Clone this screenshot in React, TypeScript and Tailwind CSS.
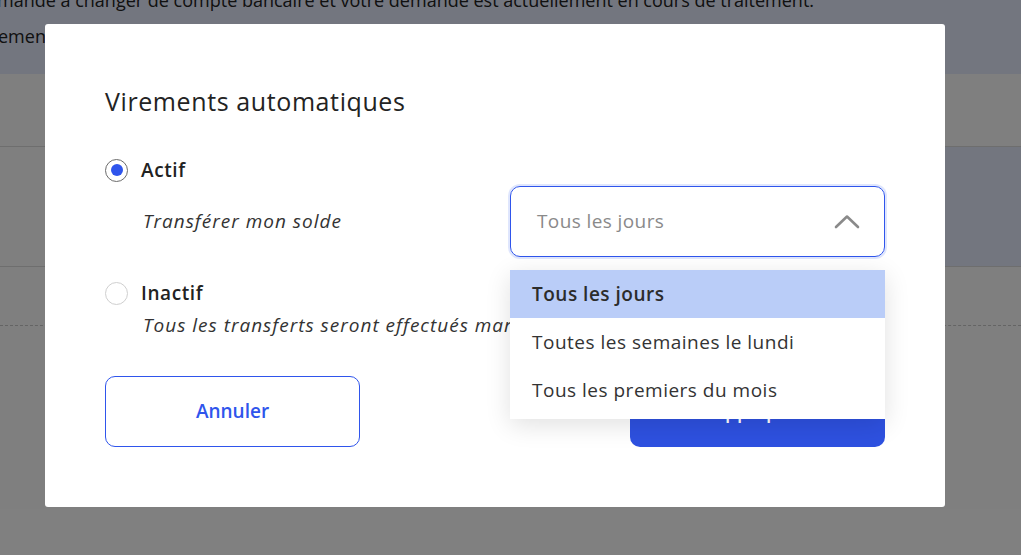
import React from "react";

const font = { fontFamily: "'Open Sans', 'Noto Sans', sans-serif" };

function Radio({ checked }: { checked?: boolean }) {
  return checked ? (
    <span className="flex h-[23px] w-[23px] items-center justify-center rounded-full border border-[#6b6b6b] bg-white">
      <span className="h-[12px] w-[12px] rounded-full bg-[#2f55ec]" />
    </span>
  ) : (
    <span className="h-[23px] w-[23px] rounded-full border border-[#cfcfcf] bg-white" />
  );
}

function Background() {
  return (
    <div className="flex h-[555px] w-full flex-col bg-white text-[18px] text-[#222]" style={{ fontFamily: "'Open Sans', sans-serif" }}>
      {/* info banner */}
      <div className="h-[74px] overflow-hidden bg-[#e6ecff]">
        <p className="-mt-[12px] -ml-[3px] whitespace-nowrap leading-[24px]">
          mande à changer de compte bancaire et votre demande est actuellement en cours de traitement.
        </p>
        <p className="mt-[12px] -ml-[2px] whitespace-nowrap leading-[24px]">ements automatiques</p>
      </div>
      <div className="h-[72px]" />
      {/* tabs row */}
      <div className="grid h-[121px] grid-cols-[1fr_420px] border-y border-[#dcdcdc]">
        <div />
        <div className="bg-[#e6ecff] pt-[30px] pl-[20px] text-[18px] font-semibold text-[#3a50ff]">Virements automatiques</div>
      </div>
      <div className="h-[59px] border-b border-dashed border-[#c8c8c8]" />
    </div>
  );
}

export default function App() {
  return (
    <div className="relative h-[555px] w-full overflow-hidden">
      <Background />
      <div className="absolute inset-0 bg-black/50" />

      <div
        className="absolute left-[45px] top-[24px] h-[483px] w-[900px] rounded-[3px] bg-white px-[60px] pt-[61px] text-[#222]"
        style={font}
      >
        <h2 className="text-[25px] font-medium leading-[32px] tracking-[0.6px] text-[#232323]">Virements automatiques</h2>

        <div className="mt-[41px] flex h-[24px] items-center gap-[13px]">
          <Radio checked />
          <span className="text-[19px] font-semibold tracking-[0.6px]">Actif</span>
        </div>

        <div className="mt-[4px] flex items-center justify-between">
          <span className="pl-[38px] text-[19px] italic tracking-[1px] text-[#333]">Transférer mon solde</span>
          <div className="relative w-[375px]">
            <div className="flex h-[71px] items-center justify-between rounded-[10px] border border-[#2f55ec] pl-[26px] pr-[24px] shadow-[0_0_0_2px_#dfe6fd]">
              <span className="text-[19px] tracking-[0.4px] text-[#8a8a8a]">Tous les jours</span>
              <svg width="26" height="15" viewBox="0 0 26 15" fill="none">
                <path d="M2 13 L13 2.5 L24 13" stroke="#8a8a8a" strokeWidth="2.6" strokeLinecap="round" strokeLinejoin="round" />
              </svg>
            </div>
            {/* open menu */}
            <ul className="absolute left-0 top-[84px] z-10 w-[375px] bg-white pb-[5px] text-[19px] tracking-[0.5px] text-[#333] shadow-[0_6px_24px_rgba(0,0,0,0.12)]">
              <li className="flex h-[48px] items-center bg-[#bacdf8] pl-[22px] font-semibold text-[#2c2c2c]">Tous les jours</li>
              <li className="flex h-[48px] items-center pl-[22px]">Toutes les semaines le lundi</li>
              <li className="flex h-[48px] items-center pl-[22px]">Tous les premiers du mois</li>
            </ul>
          </div>
        </div>

        <div className="mt-[24px] flex h-[24px] items-center gap-[13px]">
          <Radio />
          <span className="text-[19px] font-semibold tracking-[0.6px]">Inactif</span>
        </div>
        <p className="mt-[8px] pl-[38px] text-[19px] italic leading-[24px] tracking-[1px] text-[#333] whitespace-nowrap">
          Tous les transferts seront effectués manuellement
        </p>

        <div className="mt-[39px] flex justify-between">
          <button className="flex h-[71px] w-[255px] items-center justify-center rounded-[10px] border border-[#2f55ec] bg-white text-[19px] font-semibold text-[#2f55ec]">
            Annuler
          </button>
          <button className="flex h-[71px] w-[255px] items-center justify-center rounded-[10px] bg-[#2e51e0] text-[19px] font-semibold text-white">
            Appliquer
          </button>
        </div>
      </div>
    </div>
  );
}
